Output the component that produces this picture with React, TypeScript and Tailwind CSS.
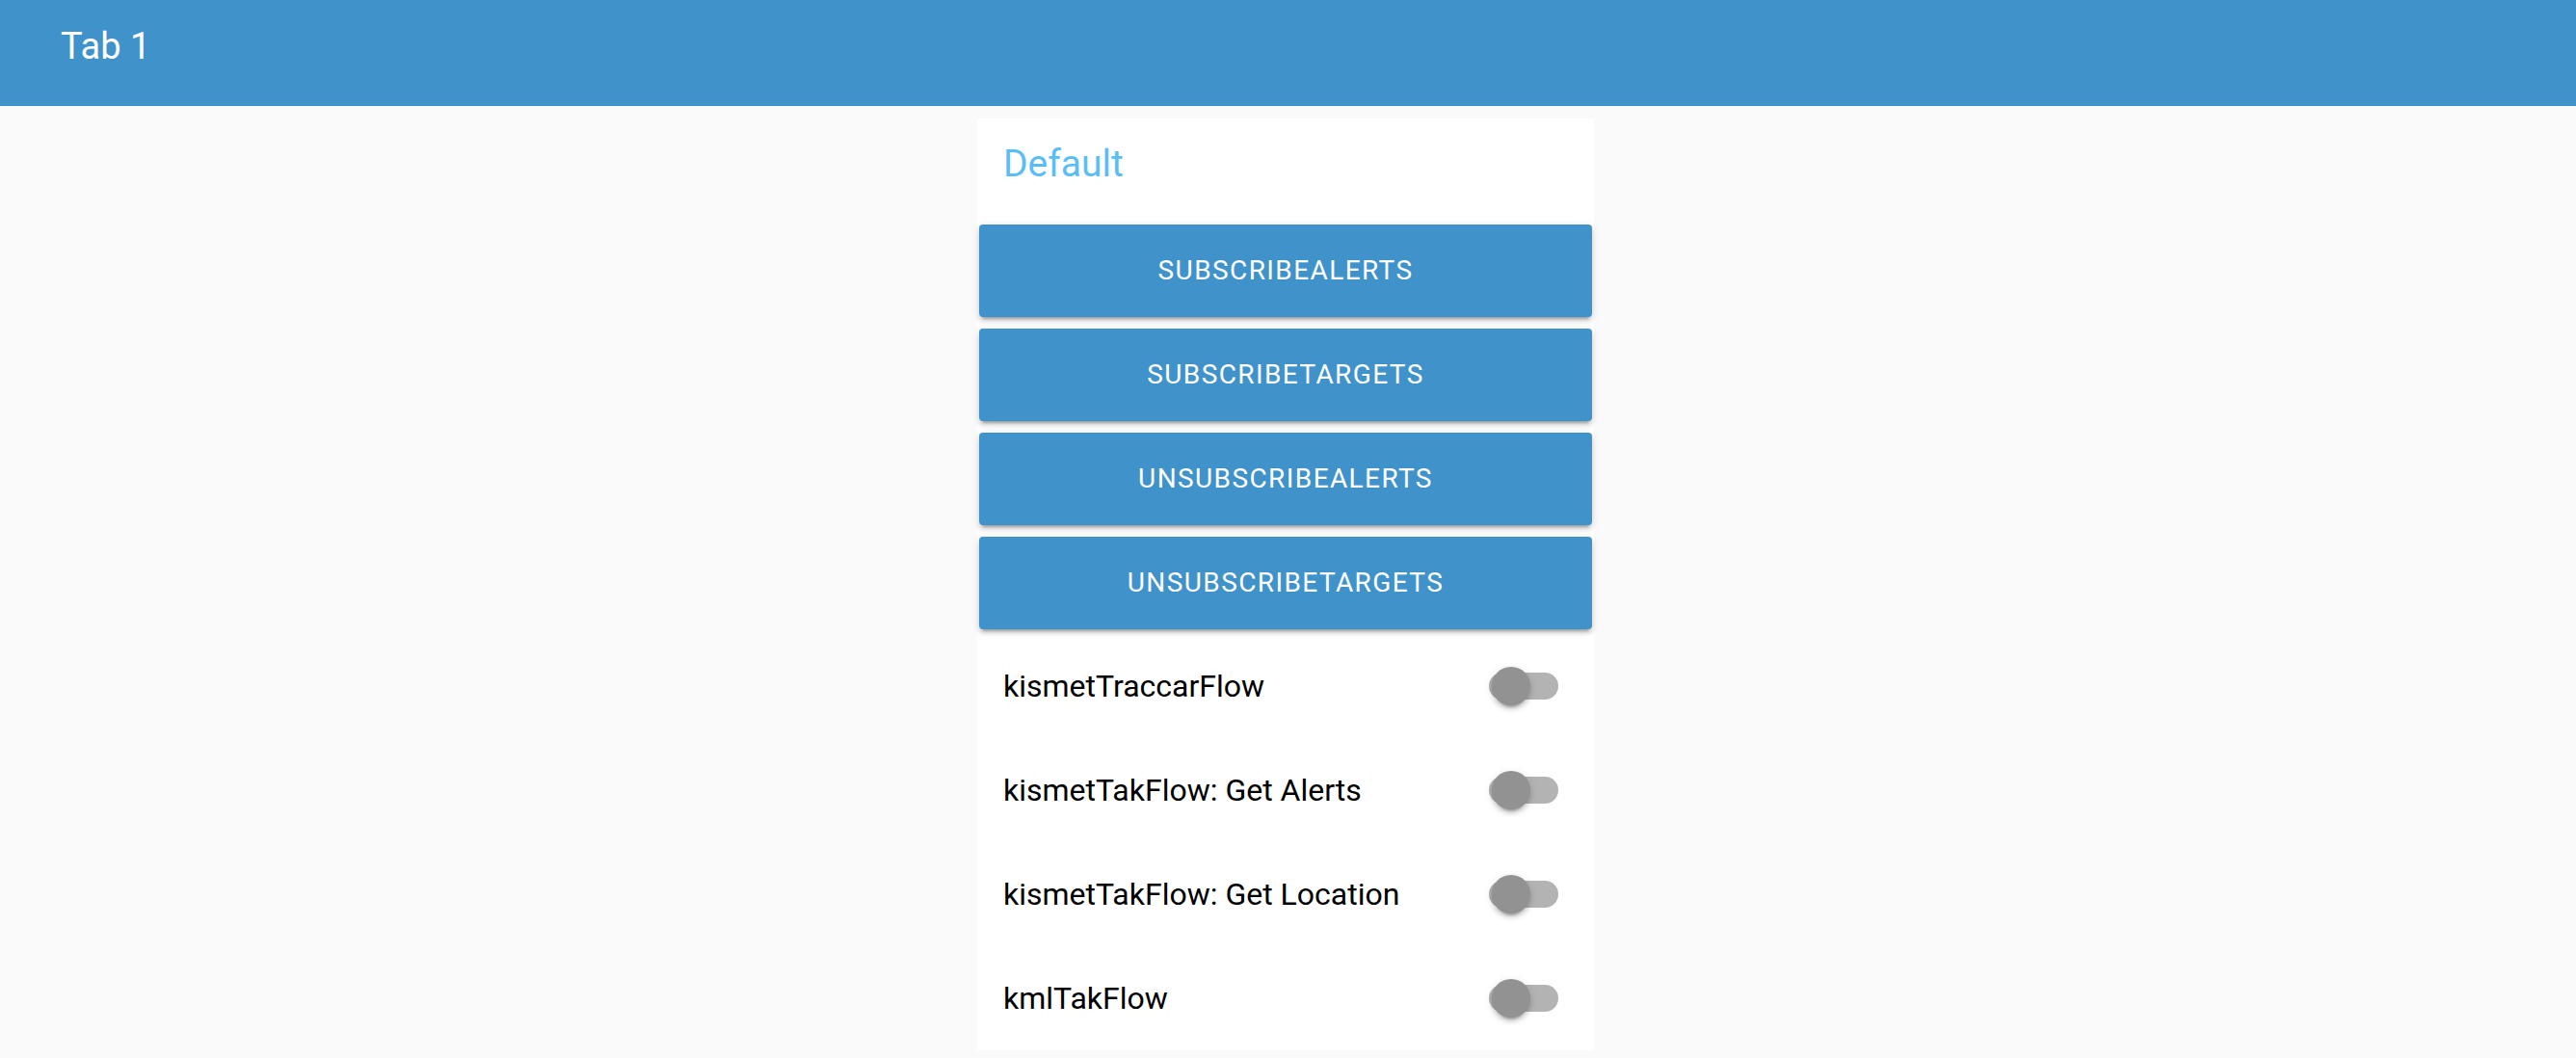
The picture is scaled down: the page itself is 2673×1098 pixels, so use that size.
import React from 'react';

const buttons = ['SUBSCRIBEALERTS', 'SUBSCRIBETARGETS', 'UNSUBSCRIBEALERTS', 'UNSUBSCRIBETARGETS'];
const flows = ['kismetTraccarFlow', 'kismetTakFlow: Get Alerts', 'kismetTakFlow: Get Location', 'kmlTakFlow'];

const Toggle: React.FC = () => (
  <div className="relative w-[72px] h-[40px] flex items-center">
    <div className="w-[72px] h-[28px] rounded-full bg-[#b3b3b3]" />
    <div className="absolute left-[3px] top-0 w-[40px] h-[40px] rounded-full bg-[#929292] shadow-[0_6px_2px_-4px_rgba(0,0,0,0.2),0_4px_4px_0_rgba(0,0,0,0.14),0_2px_10px_0_rgba(0,0,0,0.12)]" />
  </div>
);

const App: React.FC = () => {
  return (
    <div className="min-h-screen bg-[#fafafa] font-['Roboto',sans-serif]">
      {/* Toolbar */}
      <div className="h-[110px] bg-[#4092ca] pl-[63px] pt-[29px]">
        <h1 className="text-[38px] leading-none text-white">Tab 1</h1>
      </div>

      {/* Content */}
      <div className="flex justify-center pr-[5px] pt-[13px]">
        <div className="w-[640px] bg-white">
          <div className="h-[110px] pl-[27px] pt-[28px]">
            <h2 className="text-[39px] leading-none text-[#5bbdf8]">Default</h2>
          </div>

          <div className="flex flex-col gap-[12px] px-[2px]">
            {buttons.map((b) => (
              <button
                key={b}
                className="h-[96px] w-full rounded-[4px] bg-[#4092ca] text-white text-[28px] tracking-[0.05em] shadow-[0_6px_2px_-4px_rgba(0,0,0,0.2),0_4px_4px_0_rgba(0,0,0,0.14),0_2px_10px_0_rgba(0,0,0,0.12)]"
              >
                {b}
              </button>
            ))}
          </div>

          <div className="mt-[5px]">
            {flows.map((f) => (
              <div key={f} className="h-[108px] flex items-center justify-between pl-[27px] pr-[37px]">
                <span className="text-[32px] text-black">{f}</span>
                <Toggle />
              </div>
            ))}
          </div>
        </div>
      </div>
    </div>
  );
};

export default App;
